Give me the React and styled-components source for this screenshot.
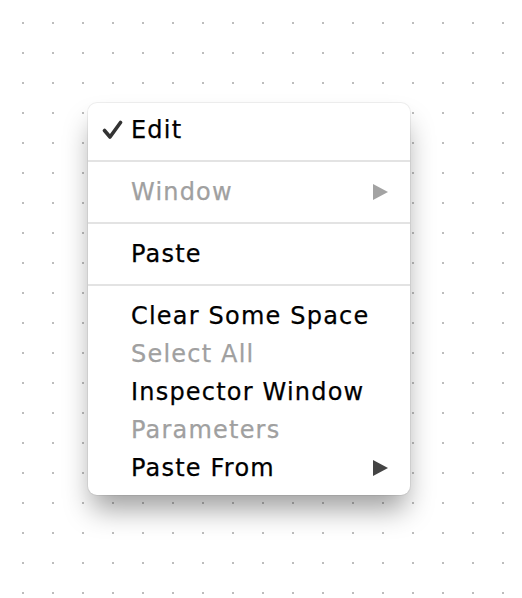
import React from 'react';
import styled, { createGlobalStyle } from 'styled-components';

const GlobalStyle = createGlobalStyle`
  html, body {
    margin: 0;
    padding: 0;
    background: #ffffff;
  }
`;

const Canvas = styled.div`
  width: 522px;
  height: 598px;
  box-sizing: border-box;
  padding: 103px 0 0 88px;
  background-color: #ffffff;
  background-image: radial-gradient(circle, #bdbdbd 0.9px, transparent 1.4px);
  background-size: 30px 30px;
  background-position: 8px 8px;
`;

const Menu = styled.div`
  width: 322px;
  box-sizing: border-box;
  padding: 8px 0;
  background: #ffffff;
  border-radius: 9px;
  box-shadow: 0 0 0 1px rgba(0, 0, 0, 0.06), 0 18px 28px -4px rgba(0, 0, 0, 0.38);
  font-family: 'DejaVu Sans', 'Noto Sans', sans-serif;
  font-size: 24px;
  letter-spacing: 1.2px;
`;

const Row = styled.div`
  display: flex;
  align-items: center;
  height: 38px;
  padding: 0 22px 0 14px;
  color: ${(p) => (p.$disabled ? '#a0a0a0' : '#000000')};
`;

const Check = styled.span`
  width: 29px;
  display: flex;
  align-items: center;
`;

const Label = styled.span`
  flex: 1;
  line-height: 1;
  -webkit-text-stroke: 0.25px currentColor;
`;

const Arrow = styled.span`
  width: 0;
  height: 0;
  border-top: 8px solid transparent;
  border-bottom: 8px solid transparent;
  border-left: 15px solid ${(p) => (p.$disabled ? '#a3a3a3' : '#444444')};
`;

const Separator = styled.div`
  height: 24px;
  display: flex;
  align-items: center;
  &::after {
    content: '';
    flex: 1;
    height: 2px;
    background: #e3e3e3;
  }
`;

const CheckIcon = () => (
  <svg width="21" height="20" viewBox="0 0 21 20">
    <path d="M2.5 10.5 L8 17 L18.5 2.5" fill="none" stroke="#333" strokeWidth="3.6" strokeLinecap="round" strokeLinejoin="round" />
  </svg>
);

const Item = ({ label, checked, disabled, submenu }) => (
  <Row $disabled={disabled}>
    <Check>{checked && <CheckIcon />}</Check>
    <Label>{label}</Label>
    {submenu && <Arrow $disabled={disabled} />}
  </Row>
);

export default function App() {
  return (
    <>
      <GlobalStyle />
      <Canvas>
        <Menu>
          <Item label="Edit" checked />
          <Separator />
          <Item label="Window" disabled submenu />
          <Separator />
          <Item label="Paste" />
          <Separator />
          <Item label="Clear Some Space" />
          <Item label="Select All" disabled />
          <Item label="Inspector Window" />
          <Item label="Parameters" disabled />
          <Item label="Paste From" submenu />
        </Menu>
      </Canvas>
    </>
  );
}
